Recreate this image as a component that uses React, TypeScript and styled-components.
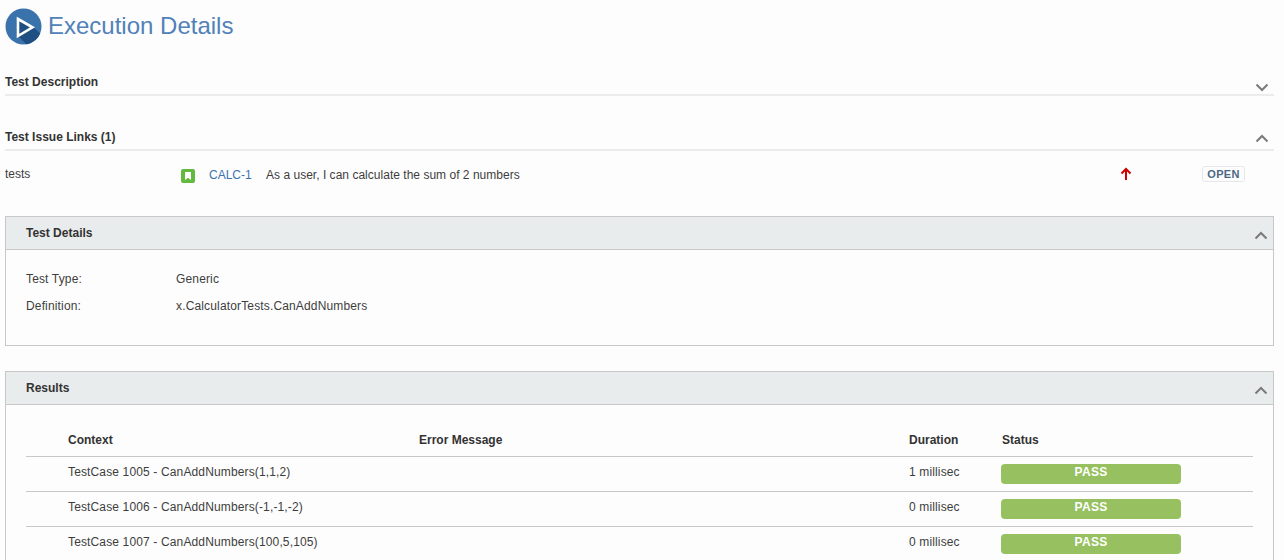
import React from "react";
import styled, { createGlobalStyle } from "styled-components";

const results = [
  { context: "TestCase 1005 - CanAddNumbers(1,1,2)", duration: "1 millisec" },
  { context: "TestCase 1006 - CanAddNumbers(-1,-1,-2)", duration: "0 millisec" },
  { context: "TestCase 1007 - CanAddNumbers(100,5,105)", duration: "0 millisec" },
];

const Chevron: React.FC<{ up?: boolean; $lift?: number }> = ({ up, $lift }) => (
  <ChevronSvg $lift={$lift} width="14" height="9" viewBox="0 0 14 9">
    <path d={up ? "M1.5 7.5 L7 2 L12.5 7.5" : "M1.5 1.5 L7 7 L12.5 1.5"} fill="none" stroke="#7a7a7a" strokeWidth="2" />
  </ChevronSvg>
);

const App: React.FC = () => {
  return (
    <Page>
      <GlobalStyle />
      <Header>
        <svg width="37" height="37" viewBox="0 0 37 37">
          <defs>
            <clipPath id="disc">
              <circle cx="18.5" cy="18.5" r="18" />
            </clipPath>
          </defs>
          <circle cx="18.5" cy="18.5" r="18" fill="#3a72ab" />
          <path d="M13 28 L22 37 L37 37 L37 27 L28 19 Z" fill="#1f4f82" clipPath="url(#disc)" />
          <path d="M13 11 L27.5 19.3 L13 28 Z" fill="#1f4f82" stroke="#ffffff" strokeWidth="2.6" />
        </svg>
        <Title>Execution Details</Title>
      </Header>

      <Section $gap={24}>
        <SectionTitle>Test Description</SectionTitle>
        <Chevron $lift={2} />
      </Section>

      <Section $gap={28}>
        <SectionTitle>Test Issue Links (1)</SectionTitle>
        <Chevron up $lift={6} />
      </Section>

      <IssueRow>
        <IssueKind>tests</IssueKind>
        <StoryIcon width="14" height="14" viewBox="0 0 14 14">
          <rect width="14" height="14" rx="2" fill="#63ba3c" />
          <path d="M4 3 H10 V11 L7 8.8 L4 11 Z" fill="#ffffff" />
        </StoryIcon>
        <IssueKey>CALC-1</IssueKey>
        <IssueSummary>As a user, I can calculate the sum of 2 numbers</IssueSummary>
        <Priority width="12" height="14" viewBox="0 0 12 14">
          <path d="M6 13 V2 M1.5 6.5 L6 2 L10.5 6.5" fill="none" stroke="#d00000" strokeWidth="2" />
        </Priority>
        <Lozenge>OPEN</Lozenge>
      </IssueRow>

      <Panel $top={19}>
        <PanelHead>
          <PanelTitle>Test Details</PanelTitle>
          <PanelChevron>
            <Chevron up />
          </PanelChevron>
        </PanelHead>
        <DetailBody>
          <DetailRow>
            <DetailLabel>Test Type:</DetailLabel>
            <span>Generic</span>
          </DetailRow>
          <DetailRow>
            <DetailLabel>Definition:</DetailLabel>
            <span>x.CalculatorTests.CanAddNumbers</span>
          </DetailRow>
        </DetailBody>
      </Panel>

      <Panel $top={25}>
        <PanelHead>
          <PanelTitle>Results</PanelTitle>
          <PanelChevron>
            <Chevron up />
          </PanelChevron>
        </PanelHead>
        <ResultsBody>
          <ResultsHead>
            <HeadCell>Context</HeadCell>
            <HeadCell>Error Message</HeadCell>
            <HeadCell>Duration</HeadCell>
            <HeadCell>Status</HeadCell>
          </ResultsHead>
          {results.map((r) => (
            <ResultRow key={r.context}>
              <span>{r.context}</span>
              <span />
              <span>{r.duration}</span>
              <PassBar>PASS</PassBar>
            </ResultRow>
          ))}
        </ResultsBody>
      </Panel>
    </Page>
  );
};

export default App;

const GlobalStyle = createGlobalStyle`
  html, body {
    margin: 0;
    height: 560px;
    overflow: hidden;
    background: #fdfdfd;
  }
  body {
    font-family: "Liberation Sans", Arial, sans-serif;
    font-size: 12px;
    color: #3d3d3d;
  }
`;

const Page = styled.div`
  padding: 7px 10px 0 5px;
  height: 553px;
  overflow: hidden;
`;

const Header = styled.div`
  display: flex;
  align-items: center;
  gap: 6px;
  height: 38px;
`;

const Title = styled.h1`
  margin: 0;
  font-size: 24px;
  font-weight: 400;
  color: #5081b9;
`;

const Section = styled.div<{ $gap: number }>`
  display: flex;
  justify-content: space-between;
  align-items: flex-end;
  height: 25px;
  margin-top: ${(p) => p.$gap}px;
  padding-right: 5px;
  border-bottom: 2px solid #ececec;
`;

const SectionTitle = styled.h3`
  margin: 0;
  align-self: center;
  font-size: 12px;
  font-weight: 700;
  color: #333;
`;

const ChevronSvg = styled.svg<{ $lift?: number }>`
  display: block;
  margin-bottom: ${(p) => p.$lift ?? 0}px;
`;

const IssueRow = styled.div`
  display: flex;
  align-items: center;
  height: 46px;
`;

const IssueKind = styled.span`
  width: 176px;
`;

const StoryIcon = styled.svg`
  margin: 4px 14px 0 0;
`;

const IssueKey = styled.a`
  width: 57px;
  margin-top: 2px;
  color: #3b73af;
`;

const IssueSummary = styled.span`
  flex: 1;
  margin-top: 2px;
  letter-spacing: 0.02px;
`;

const Priority = styled.svg`
  margin-right: 70px;
`;

const Lozenge = styled.span`
  width: 41px;
  height: 14px;
  line-height: 14px;
  margin-right: 29px;
  text-align: center;
  border: 1px solid #e4e8ed;
  border-radius: 3px;
  font-size: 11px;
  font-weight: 700;
  letter-spacing: 0.3px;
  color: #4a6785;
`;

const Panel = styled.div<{ $top: number }>`
  margin-top: ${(p) => p.$top}px;
  border: 1px solid #c8c8c8;
`;

const PanelHead = styled.div`
  display: flex;
  justify-content: space-between;
  align-items: center;
  height: 32px;
  padding: 0 5px 0 20px;
  background: #e9eced;
  border-bottom: 1px solid #c8c8c8;
`;

const PanelChevron = styled.div`
  margin-top: 4px;
`;

const PanelTitle = styled.h3`
  margin: 0;
  font-size: 12px;
  font-weight: 700;
  color: #333;
`;

const DetailBody = styled.div`
  padding: 16px 20px 0;
  height: 79px;
  letter-spacing: 0.15px;
`;

const DetailRow = styled.div`
  display: flex;
  height: 27px;
  line-height: 27px;
`;

const DetailLabel = styled.span`
  width: 150px;
`;

const ResultsBody = styled.div`
  padding: 21px 20px 0;
`;

const ResultsHead = styled.div`
  display: grid;
  grid-template-columns: 351px 490px 93px 1fr;
  height: 30px;
  padding-left: 42px;
  border-bottom: 1px solid #c8c8c8;
  line-height: 28px;
`;

const HeadCell = styled.span`
  font-weight: 700;
  color: #333;
`;

const ResultRow = styled.div`
  display: grid;
  grid-template-columns: 351px 490px 92px 180px;
  height: 34px;
  padding-left: 42px;
  border-bottom: 1px solid #c8c8c8;
  line-height: 30px;
  letter-spacing: 0.14px;
`;

const PassBar = styled.span`
  height: 20px;
  margin-top: 7px;
  line-height: 16px;
  text-align: center;
  border-radius: 4px;
  background: #97c160;
  color: #fff;
  font-weight: 700;
  letter-spacing: 0.3px;
`;
